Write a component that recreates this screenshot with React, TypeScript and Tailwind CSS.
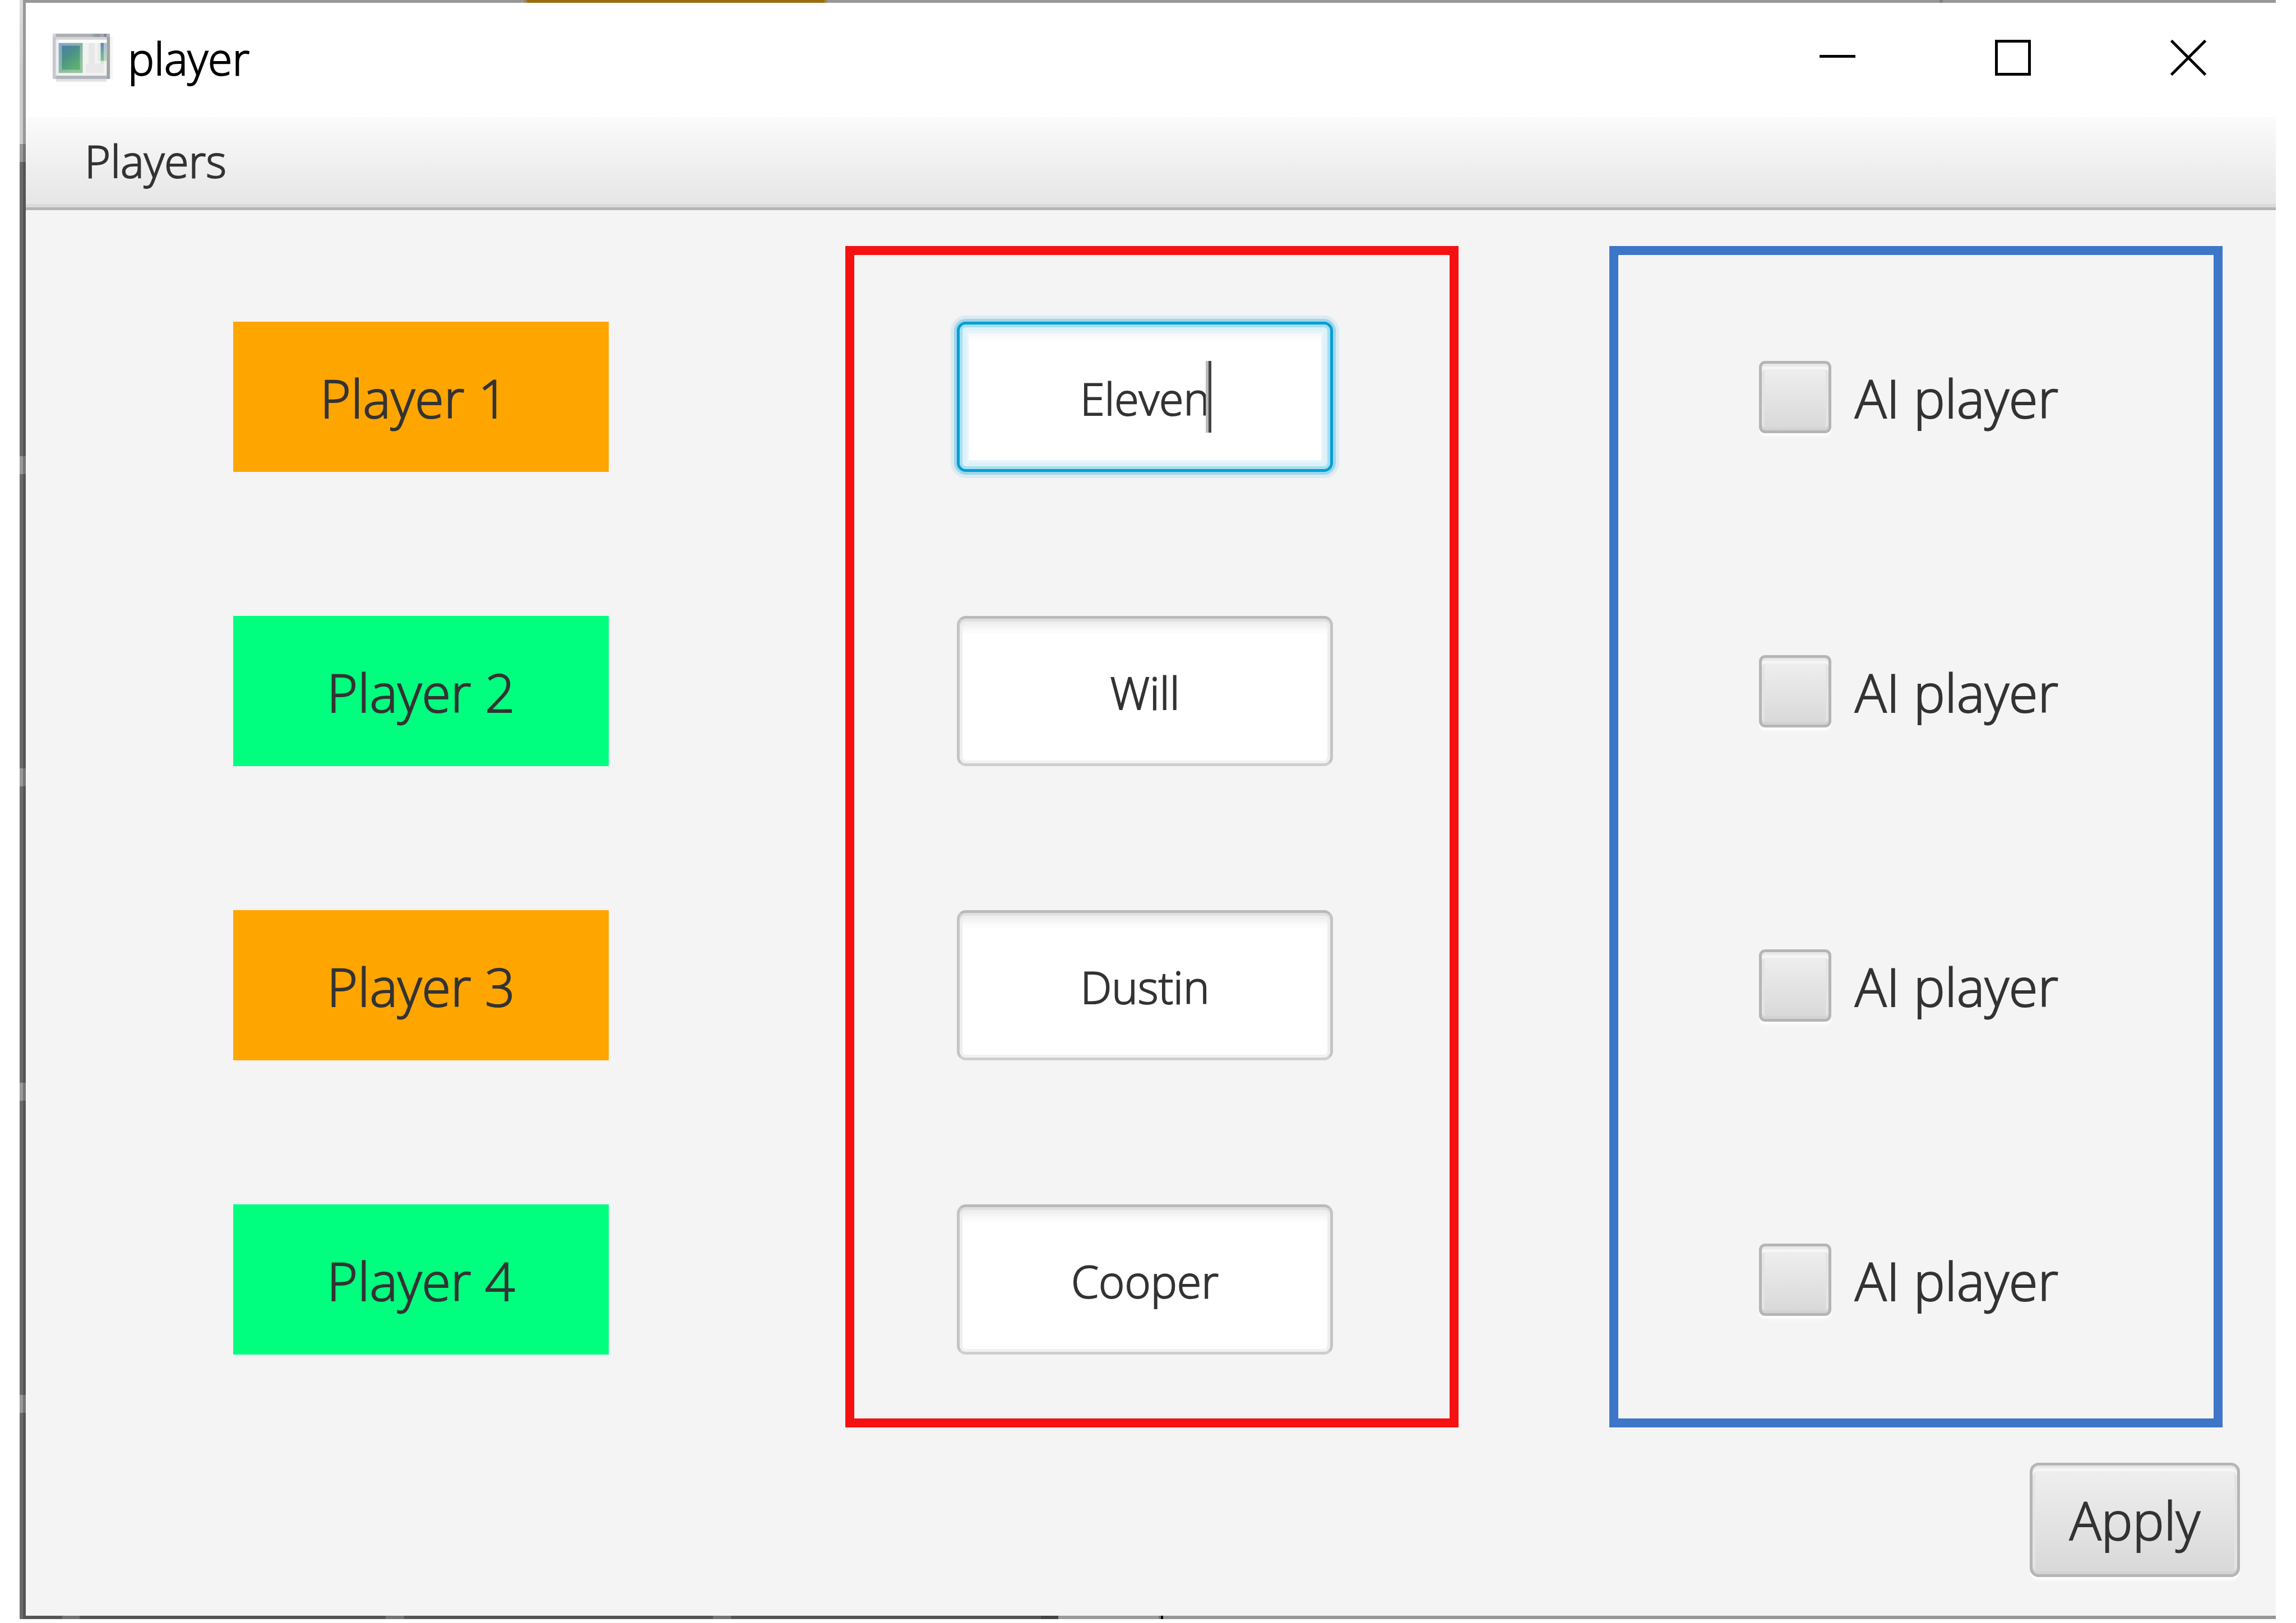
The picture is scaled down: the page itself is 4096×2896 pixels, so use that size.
type Player = { id: number; label: string; name: string; color: string; focused?: boolean };

const players: Player[] = [
  { id: 1, label: "Player 1 ", name: "Eleven", color: "bg-[#ffa500]", focused: true },
  { id: 2, label: "Player 2", name: "Will", color: "bg-[#00ff7f]" },
  { id: 3, label: "Player 3", name: "Dustin", color: "bg-[#ffa500]" },
  { id: 4, label: "Player 4", name: "Cooper", color: "bg-[#00ff7f]" },
];

const tick = "h-[32px] border-[#757575] bg-[#999999]";
const dark = "h-[525px] border-[#555555] bg-[#6b6b6b]";
const leftEdge = [
  "h-[257px] border-[#979797] bg-gradient-to-b from-[#dddddd] via-[#cccccc] to-[#cccccc]",
  tick,
  dark,
  tick,
  dark,
  tick,
  "h-[529px] border-[#555555] bg-[#6b6b6b]",
  tick,
  dark,
  tick,
  "grow border-[#555555] bg-[#6b6b6b]",
];

const bottomEdge = [
  "w-[65px] bg-[#555555]",
  "w-[31px] bg-[#737373]",
  "w-[546px] bg-[#555555]",
  "w-[33px] bg-[#737373]",
  "w-[551px] bg-[#555555]",
  "w-[32px] bg-[#737373]",
  "w-[553px] bg-[#555555]",
  "w-[31px] bg-[#444444]",
  "w-[179px] bg-[#9b9b9b]",
  "w-[4px] bg-[#777777]",
  "w-[4px] bg-[#000000]",
  "grow bg-[#979797]",
];

const raised =
  "border-[5px] border-[#b5b5b5] bg-gradient-to-b from-[#f0f0f0] to-[#d8d8d8] shadow-[inset_0_5px_0_#e9e9e9,inset_0_10px_0_#f6f6f6,inset_0_-5px_0_#d3d3d3,inset_0_0_0_5px_#e4e4e4,0_5px_0_#fdfdfd,0_10px_0_#f6f6f6]";

const field =
  "border-t-[#bababa] border-x-[#c4c4c4] border-b-[#cecece] shadow-[inset_0_5px_0_#e0e0e0,inset_0_-5px_0_#f2f2f2,inset_0_0_0_5px_#eeeeee,inset_0_11px_0_#efefef,inset_0_16px_0_#f4f4f4,inset_0_21px_0_#f9f9f9,inset_0_27px_0_#fcfcfc]";

const focusedField =
  "border-[#039ed3] shadow-[inset_0_0_0_5px_#a5def1,inset_0_0_0_11px_#dcf1fa,inset_0_0_0_16px_#e6f4fb,inset_0_21px_0_#f9f9f9,inset_0_27px_0_#fcfcfc,0_0_0_5px_#9fd5ea,0_0_0_11px_#dbebf2]";

function AppIcon() {
  return (
    <svg viewBox="0 0 390 312" className="h-[86px] w-[107px]" aria-hidden="true">
      <defs>
        <linearGradient id="pane" x1="0" y1="0" x2="0.6" y2="1">
          <stop offset="0" stopColor="#4f7dab" />
          <stop offset="0.45" stopColor="#4b9089" />
          <stop offset="1" stopColor="#5fae72" />
        </linearGradient>
        <linearGradient id="bar" x1="0" y1="0" x2="0" y2="1">
          <stop offset="0" stopColor="#5f82b6" />
          <stop offset="0.5" stopColor="#6ba89f" />
          <stop offset="1" stopColor="#80be88" />
        </linearGradient>
        <linearGradient id="side" x1="0" y1="0" x2="0" y2="1">
          <stop offset="0" stopColor="#abbdd8" />
          <stop offset="1" stopColor="#badbb9" />
        </linearGradient>
      </defs>
      <rect x="372" y="20" width="18" height="274" fill="#f5f5f5" />
      <rect x="21" y="294" width="330" height="18" fill="#e3e3e3" />
      <rect x="0" y="0" width="372" height="294" fill="#c5c8cd" />
      <rect x="0" y="0" width="21" height="21" fill="#d2d5d8" />
      <rect x="21" y="0" width="234" height="21" fill="#abafb4" />
      <rect x="255" y="0" width="18" height="21" fill="#9aa3ad" />
      <rect x="273" y="0" width="39" height="21" fill="#8f97a2" />
      <rect x="312" y="0" width="21" height="21" fill="#9fa3a9" />
      <rect x="333" y="0" width="18" height="21" fill="#7c8592" />
      <rect x="351" y="0" width="21" height="21" fill="#b3b5b6" />
      <rect x="351" y="21" width="21" height="273" fill="#9fa3a8" />
      <rect x="21" y="21" width="330" height="18" fill="#d3d5d7" />
      <rect x="21" y="39" width="330" height="234" fill="#f2f2f0" />
      <rect x="21" y="39" width="18" height="234" fill="#eaeef3" />
      <rect x="39" y="39" width="312" height="21" fill="#fcfdfa" />
      <rect x="234" y="60" width="39" height="135" fill="#e7e7e7" />
      <rect x="216" y="195" width="117" height="60" fill="#e9e9e9" />
      <rect x="21" y="273" width="330" height="21" fill="#b1b5bd" />
      <rect x="39" y="60" width="156" height="195" fill="url(#pane)" opacity="0.65" />
      <rect x="60" y="78" width="117" height="156" fill="url(#pane)" />
      <rect x="294" y="60" width="18" height="117" fill="#e2ebed" />
      <rect x="312" y="60" width="21" height="117" fill="url(#bar)" />
      <rect x="333" y="60" width="18" height="117" fill="url(#side)" />
      <rect x="312" y="177" width="21" height="18" fill="#d8e6d8" />
    </svg>
  );
}

function TitleBar() {
  const control = "flex h-full w-[313px] items-center justify-center";
  return (
    <header className="flex h-[204px] items-center bg-white pb-2 pl-12 text-black">
      <AppIcon />
      <h1 className="ml-[27px] grow text-[79px] leading-none">player</h1>
      <button type="button" aria-label="Minimize" className={control}>
        <svg viewBox="0 0 64 64" className="size-16">
          <path d="M0 29.500H64" stroke="#000" strokeWidth="5" />
        </svg>
      </button>
      <button type="button" aria-label="Maximize" className={control}>
        <svg viewBox="0 0 64 64" className="size-16">
          <rect x="2.500" y="2.500" width="59" height="59" fill="none" stroke="#000" strokeWidth="5" />
        </svg>
      </button>
      <button type="button" aria-label="Close" className={control}>
        <svg viewBox="0 0 64 64" className="size-16">
          <path d="M1.500 1.500L62.500 62.500M62.500 1.500L1.500 62.500" stroke="#000" strokeWidth="5" />
        </svg>
      </button>
    </header>
  );
}

export default function App() {
  return (
    <div className="flex min-h-screen bg-white pr-[36px] pb-[7px] pl-[35px] font-['Open_Sans',sans-serif] font-light text-[#333333] [-webkit-text-stroke:2px]">
      <div className="flex w-[11px] shrink-0 flex-col">
        {leftEdge.map((segment, i) => (
          <div key={i} className={`border-r-[5px] ${segment}`} />
        ))}
      </div>

      <div className="flex grow flex-col">
        <div className="flex h-[5px] bg-[#979797]">
          <div className="ml-[889px] w-[541px] border-x-[5px] border-[#a18352] bg-[#9c6b0f]" />
          <div className="ml-[1984px] w-[6px] bg-[#7f7f7f]" />
        </div>

        <TitleBar />

        <nav className="flex h-[166px] border-b-[5px] border-[#b5b5b5]">
          <div className="flex grow items-center border-b-[6px] border-[#dadada] bg-gradient-to-b from-[#fbfbfb] to-[#e6e6e6] pl-[105px]">
            <button type="button" className="text-[79px] leading-none">
              Players
            </button>
          </div>
        </nav>

        <form className="flex grow flex-col bg-[#f4f4f4] pt-16" onSubmit={(e) => e.preventDefault()}>
          <div className="grid grid-cols-[370fr_669fr_422fr_1093fr_269fr_1093fr_95fr]">
            <div className="col-start-2 flex flex-col gap-[257px] pt-[135px]">
              {players.map((p) => (
                <label
                  key={p.id}
                  htmlFor={`name-${p.id}`}
                  className={`flex h-[268px] items-center justify-center pt-1 text-[94px] leading-none whitespace-pre ${p.color}`}
                >
                  {p.label}
                </label>
              ))}
            </div>

            <div className="col-start-4 flex flex-col gap-[257px] border-[16px] border-[#f51111] pt-[119px] pr-[208px] pb-[114px] pl-[183px]">
              {players.map((p) => (
                <div key={p.id} className="relative">
                  <input
                    id={`name-${p.id}`}
                    type="text"
                    defaultValue={p.name}
                    className={`block h-[268px] w-full rounded-[16px] border-[5px] bg-white pt-1 text-center text-[79px] caret-transparent outline-none [-webkit-text-stroke:2px] ${p.focused ? focusedField : field}`}
                  />
                  {p.focused && (
                    <span className="absolute top-[70px] left-1/2 ml-[109px] h-[128px] w-[10px] border-l-[5px] border-[#bababa] bg-[#444444]" />
                  )}
                </div>
              ))}
            </div>

            <div className="col-start-6 flex flex-col gap-[257px] border-[16px] border-[#3d76c9] pt-[119px] pb-[114px] pl-[251px]">
              {players.map((p) => (
                <label key={p.id} className="flex h-[268px] items-center gap-[42px] text-[94px] leading-none">
                  <input type="checkbox" className={`size-[129px] appearance-none rounded-[11px] ${raised}`} />
                  <span className="pt-1">AI player</span>
                </label>
              ))}
            </div>
          </div>

          <div className="flex justify-end pt-[63px] pr-16 pb-[69px]">
            <button
              type="submit"
              className={`h-[204px] w-[375px] rounded-[16px] text-[94px] leading-none ${raised}`}
            >
              Apply
            </button>
          </div>
        </form>

        <div className="flex h-[6px]">
          {bottomEdge.map((segment, i) => (
            <div key={i} className={segment} />
          ))}
        </div>
      </div>
    </div>
  );
}
